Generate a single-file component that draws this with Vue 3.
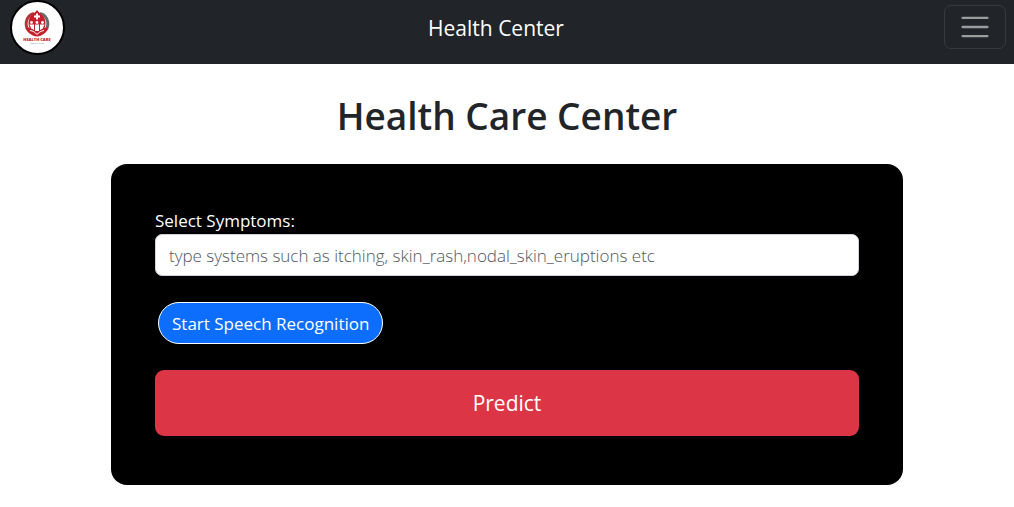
<script setup>
import { ref } from 'vue'

const symptoms = ref('')
</script>

<template>
  <div class="page">
    <nav class="navbar">
      <a class="logo" href="#" aria-label="Health Care home">
        <svg viewBox="0 0 51 51" aria-hidden="true">
          <path d="M28 11.5A10.5 10.5 0 0 1 31 30.5" fill="none" stroke="#6b6b6d" stroke-width="3" />
          <path d="M22 11.5A10.5 10.5 0 0 0 19 30.5" fill="none" stroke="#b5343b" stroke-width="3" />
          <path d="M25 8C22 12 16.500 14 16.500 21C16.500 27 20 31 25 32C30 31 33.500 27 33.500 21C33.500 14 28 12 25 8Z" fill="#c4202e" />
          <path d="M25 11.500V17.500M22 14.500H28" stroke="#fff" stroke-width="2" />
          <g fill="#fff">
            <circle cx="19.500" cy="20.500" r="1.400" />
            <circle cx="25" cy="20.500" r="1.400" />
            <circle cx="30.500" cy="20.500" r="1.400" />
            <path d="M17.500 22.500H22V28L19.500 27ZM23 22.500H27V29H23ZM28 22.500H32.500L30.500 27L28 28Z" />
          </g>
          <path d="M14 25C15 31 20 34 25 34.500C30 34 35 31 36 25C31 26 28 28 25 31C22 28 19 26 14 25Z" fill="#c4202e" />
          <path d="M18 28.500C21 29 23 30 25 32.500C27 30 29 29 32 28.500" fill="none" stroke="#fff" stroke-width="1" />
          <text x="25" y="39" text-anchor="middle" class="logo-name">HEALTH CARE</text>
          <text x="25" y="42" text-anchor="middle" class="logo-tag">MEDICAL CARE</text>
        </svg>
      </a>
      <a class="brand" href="#">Health Center</a>
      <button class="toggler" type="button" aria-label="Toggle navigation">
        <svg viewBox="0 0 30 30" aria-hidden="true">
          <path d="M4 7h22M4 15h22M4 23h22" stroke="#fff" stroke-opacity="0.55" stroke-width="2" stroke-linecap="round" />
        </svg>
      </button>
    </nav>

    <main>
      <h1>Health Care Center</h1>
      <form class="panel" @submit.prevent>
        <label for="symptoms">Select Symptoms:</label>
        <input
          id="symptoms"
          v-model="symptoms"
          type="text"
          placeholder="type systems such as itching, skin_rash,nodal_skin_eruptions etc"
        />
        <button class="speech" type="button">Start Speech Recognition</button>
        <button class="predict" type="submit">Predict</button>
      </form>
    </main>
  </div>
</template>

<style>
body {
  margin: 0;
  background: #fff;
}
</style>

<style scoped>
.page,
.page button,
.page input {
  font-family: "Open Sans", "Noto Sans", sans-serif;
}

.page * {
  box-sizing: border-box;
}

.navbar {
  display: flex;
  align-items: flex-start;
  justify-content: space-between;
  height: 64px;
  padding: 0 8px 0 10px;
  background: #212529;
}

.logo {
  width: 55px;
  height: 55px;
  overflow: hidden;
  background: #fff;
  border: 2px solid #000;
  border-radius: 50%;
}

.logo svg {
  display: block;
  width: 100%;
}

.logo-name {
  fill: #c4202e;
  font-size: 4px;
  font-weight: 800;
}

.logo-tag {
  fill: #777;
  font-size: 2px;
}

.brand {
  margin-right: 17px;
  color: #fff;
  font-size: 21px;
  line-height: 56px;
  text-decoration: none;
}

.toggler {
  display: flex;
  align-items: center;
  justify-content: center;
  width: 62px;
  height: 44px;
  margin-top: 5px;
  padding: 0;
  background: transparent;
  border: 1px solid #373b3e;
  border-radius: 7px;
}

.toggler svg {
  width: 34px;
  height: 34px;
}

h1 {
  margin: 26px 0 22px;
  color: #212529;
  font-size: 37px;
  font-weight: 600;
  line-height: 52px;
  text-align: center;
}

.panel {
  display: flex;
  flex-direction: column;
  max-width: 792px;
  margin: 0 auto;
  padding: 44px 44px 49px;
  color: #fff;
  background: #000;
  border-radius: 16px;
}

label {
  font-size: 17px;
  line-height: 26px;
}

input {
  width: 100%;
  height: 42px;
  margin-bottom: 26px;
  padding: 0 13px;
  color: #212529;
  font-size: 17px;
  background: #fff;
  border: 1px solid #ced4da;
  border-radius: 7px;
}

input::placeholder {
  color: #50565c;
  font-weight: 300;
  opacity: 1;
}

.speech {
  align-self: flex-start;
  height: 42px;
  margin: 0 3px 26px;
  padding: 0 13px;
  color: #fff;
  font-size: 17px;
  background: #0d6efd;
  border: 1px solid #fff;
  border-radius: 21px;
}

.predict {
  height: 66px;
  color: #fff;
  font-size: 21px;
  background: #dc3545;
  border: 0;
  border-radius: 9px;
}
</style>
